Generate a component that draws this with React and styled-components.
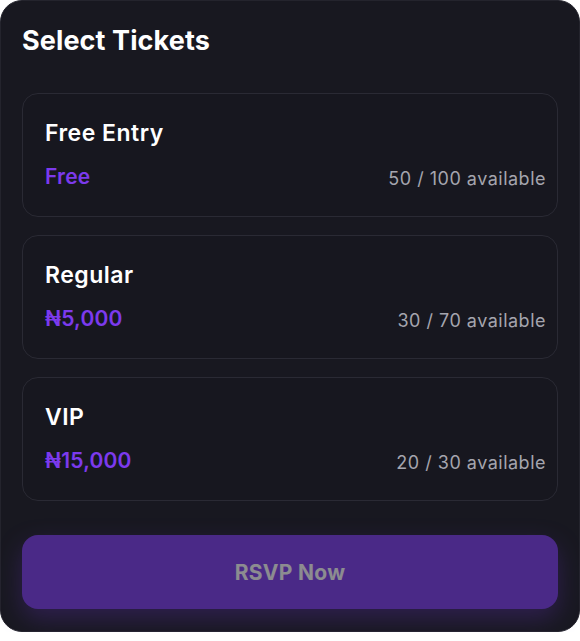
import React from 'react';
import styled, { createGlobalStyle } from 'styled-components';

const GlobalStyle = createGlobalStyle`
  body {
    margin: 0;
    background: #ffffff;
    font-family: Inter, "Noto Sans", sans-serif;
  }
`;

const Panel = styled.div`
  box-sizing: border-box;
  width: 580px;
  height: 632px;
  padding: 22px 21px 22px;
  background: #181820;
  border: 1px solid #24242d;
  border-radius: 22px;
  display: flex;
  flex-direction: column;
`;

const Title = styled.h2`
  margin: 0 0 34px;
  font-size: 27px;
  line-height: 36px;
  font-weight: 700;
  color: #ffffff;
  letter-spacing: 0.1px;
`;

const TicketList = styled.div`
  display: flex;
  flex-direction: column;
  gap: 18px;
`;

const TicketCard = styled.div`
  box-sizing: border-box;
  height: 124px;
  padding: 23px 11px 0 22px;
  border: 1px solid #2a2a34;
  border-radius: 16px;
  background: #17171f;
`;

const TicketName = styled.div`
  font-size: 23px;
  line-height: 32px;
  font-weight: 600;
  color: #ffffff;
  letter-spacing: 0.5px;
`;

const TicketRow = styled.div`
  display: flex;
  justify-content: space-between;
  align-items: baseline;
  margin-top: 13px;
`;

const Price = styled.div`
  font-size: 21px;
  line-height: 30px;
  font-weight: 600;
  color: #7c3aed;
  letter-spacing: 0.2px;
`;

const Available = styled.div`
  font-size: 18px;
  color: #a5a5ae;
  letter-spacing: 0.5px;
  transform: translateY(1px);
`;

const RsvpButton = styled.button`
  margin-top: 34px;
  height: 76px;
  border: none;
  border-radius: 16px;
  background: #7c3aed;
  color: #ffffff;
  font-family: Inter, "Noto Sans", sans-serif;
  font-size: 21px;
  font-weight: 700;
  letter-spacing: 0.3px;
  opacity: 0.5;
  box-shadow: 0 10px 24px rgba(124, 58, 237, 0.45);
  cursor: not-allowed;
`;

const tickets = [
  { name: 'Free Entry', price: 'Free', left: 50, total: 100 },
  { name: 'Regular', price: '₦5,000', left: 30, total: 70 },
  { name: 'VIP', price: '₦15,000', left: 20, total: 30 },
];

const App = () => {
  return (
    <>
      <GlobalStyle />
      <Panel>
        <Title>Select Tickets</Title>
        <TicketList>
          {tickets.map(t => (
            <TicketCard key={t.name}>
              <TicketName>{t.name}</TicketName>
              <TicketRow>
                <Price>{t.price}</Price>
                <Available>
                  {t.left} / {t.total} available
                </Available>
              </TicketRow>
            </TicketCard>
          ))}
        </TicketList>
        <RsvpButton disabled>RSVP Now</RsvpButton>
      </Panel>
    </>
  );
};

export default App;
